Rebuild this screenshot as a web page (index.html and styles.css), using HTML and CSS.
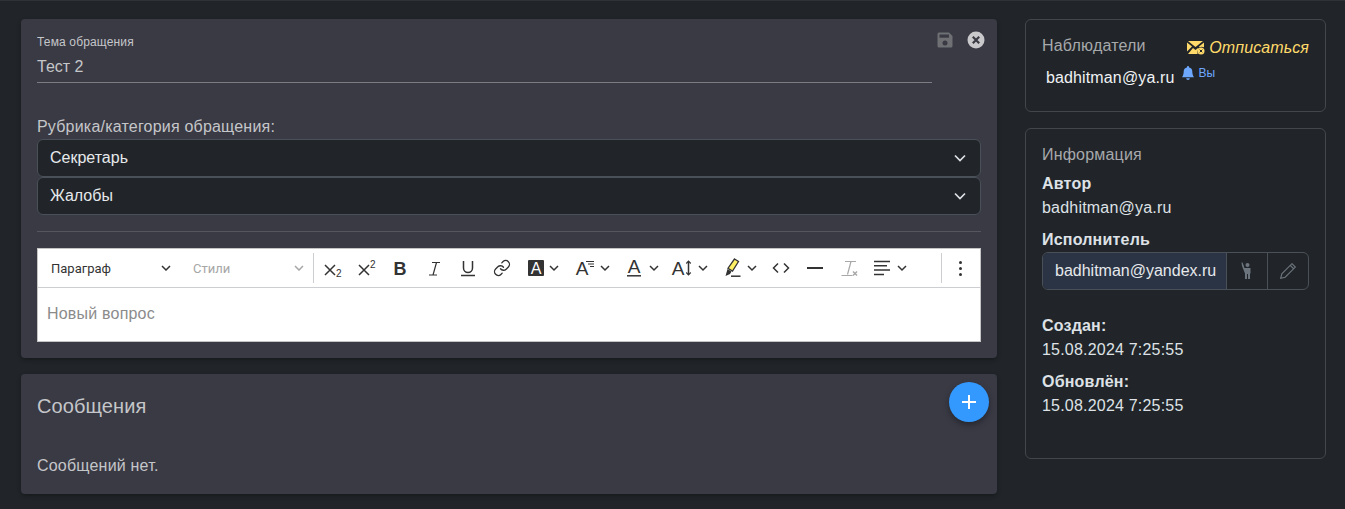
FILE: index.html
```html
<!DOCTYPE html>
<html lang="ru">
<head>
    <meta charset="UTF-8">
    <title>Обращение</title>
    <link rel="stylesheet" href="styles.css">
</head>
<body>
    <div class="page">
        <div class="main-col">
            <div class="card ticket-card">
                <div class="ticket-actions">
                    <svg class="act-save" width="18" height="18" viewBox="0 0 18 18"><path fill="#6f7074" d="M3 1.500h10l3.500 3.500v10a1.500 1.500 0 0 1-1.500 1.500H3a1.500 1.500 0 0 1-1.500-1.500V3A1.500 1.500 0 0 1 3 1.500z"/><rect x="3.500" y="3.500" width="9.500" height="3.200" fill="#393a44"/><circle cx="9" cy="12" r="2.500" fill="#393a44"/></svg>
                    <svg class="act-close" width="18" height="18" viewBox="0 0 18 18"><circle cx="9" cy="9" r="8.500" fill="#c9c9cb"/><path d="M5.800 5.800l6.400 6.400M12.200 5.800l-6.400 6.400" stroke="#393a44" stroke-width="2.200"/></svg>
                </div>
                <div class="subject">
                    <div class="subject-label">Тема обращения</div>
                    <div class="subject-value">Тест 2</div>
                </div>
                <div class="cat-label">Рубрика/категория обращения:</div>
                <div class="select">Секретарь<svg width="12" height="8" viewBox="0 0 12 8"><path d="M1 1.500l5 5 5-5" fill="none" stroke="#dee2e6" stroke-width="1.700"/></svg></div>
                <div class="select">Жалобы<svg width="12" height="8" viewBox="0 0 12 8"><path d="M1 1.500l5 5 5-5" fill="none" stroke="#dee2e6" stroke-width="1.700"/></svg></div>
                <hr class="divider">
                <div class="editor">
                    <div class="toolbar">
                        <div class="tb-drop tb-para">Параграф<svg class="caret" width="10" height="6" viewBox="0 0 10 6"><path d="M1 1l4 4 4-4"/></svg></div>
                        <div class="tb-drop tb-styles">Стили<svg class="caret caret-off" width="10" height="6" viewBox="0 0 10 6"><path d="M1 1l4 4 4-4"/></svg></div>
                        <div class="tb-sep"></div>

                        <div class="tb-btn"><svg width="20" height="20" viewBox="0 0 20 20"><path class="ln" d="M2 7l10 10M12 7L2 17"/><text x="13" y="19" class="sm">2</text></svg></div>
                        <div class="tb-btn tb-narrow"><svg width="20" height="20" viewBox="0 0 20 20"><path class="ln" d="M2 7l10 10M12 7L2 17"/><text x="13" y="10" class="sm">2</text></svg></div>
                        <div class="tb-btn"><svg width="20" height="20" viewBox="0 0 20 20"><text x="10" y="17" class="bold">B</text></svg></div>
                        <div class="tb-btn"><svg width="20" height="20" viewBox="0 0 20 20"><path class="ln-thin" d="M8 4.500h8M5 17h8M12.500 4.500L9 17"/></svg></div>
                        <div class="tb-btn"><svg width="20" height="20" viewBox="0 0 20 20"><path class="ln" d="M5.500 3v7a4.500 4.500 0 0 0 9 0V3"/><path class="ln" d="M3 17.500h14"/></svg></div>
                        <div class="tb-btn"><svg class="ic-link" width="18" height="18" viewBox="0 0 24 24"><path d="M10 13a5 5 0 0 0 7.540.540l3-3a5 5 0 0 0-7.070-7.070l-1.720 1.710"/><path d="M14 11a5 5 0 0 0-7.540-.540l-3 3a5 5 0 0 0 7.070 7.070l1.710-1.710"/></svg></div>

                        <div class="tb-btn tb-wide"><svg width="16" height="16" viewBox="0 0 16 16"><rect width="16" height="16" rx="1" fill="#333"/><text x="8" y="14" class="on-dark">A</text></svg><svg class="caret" width="10" height="6" viewBox="0 0 10 6"><path d="M1 1l4 4 4-4"/></svg></div>
                        <div class="tb-btn tb-wide"><svg width="20" height="20" viewBox="0 0 20 20"><text x="7" y="17" class="big">A</text><path class="ln-thin" d="M11 3.500h8M13 6h6M15 8.500h4"/></svg><svg class="caret" width="10" height="6" viewBox="0 0 10 6"><path d="M1 1l4 4 4-4"/></svg></div>
                        <div class="tb-btn tb-wide"><svg width="20" height="20" viewBox="0 0 20 20"><text x="10" y="15" class="big">A</text><path class="ln" d="M3 17.800h14"/></svg><svg class="caret" width="10" height="6" viewBox="0 0 10 6"><path d="M1 1l4 4 4-4"/></svg></div>
                        <div class="tb-btn tb-wide tb-size"><svg width="22" height="20" viewBox="0 0 22 20"><text x="7" y="16.500" class="big">A</text><path class="ln" d="M17.500 3.500v13"/><path class="ln-thin" d="M15.300 5.500l2.200-2.300 2.200 2.300M15.300 14.500l2.200 2.300 2.200-2.300"/></svg><svg class="caret" width="10" height="6" viewBox="0 0 10 6"><path d="M1 1l4 4 4-4"/></svg></div>
                        <div class="tb-btn tb-wide"><svg width="20" height="20" viewBox="0 0 20 20"><path d="M12.500 1l4 2.500-6 9.500-4.500-2.800z" fill="#fff064" stroke="#333" stroke-width="1.300"/><path d="M5.500 11l4 2.500-1.500 2.500-4.500 2z" fill="#333"/><path class="ln" d="M9 18.200h9.500"/></svg><svg class="caret" width="10" height="6" viewBox="0 0 10 6"><path d="M1 1l4 4 4-4"/></svg></div>

                        <div class="tb-btn"><svg width="20" height="20" viewBox="0 0 20 20"><path class="ln" d="M7 5.500L2.500 10 7 14.500M13 5.500l4.500 4.500-4.500 4.500"/></svg></div>
                        <div class="tb-btn"><svg width="20" height="20" viewBox="0 0 20 20"><path d="M2 10h16" stroke="#333" stroke-width="2"/></svg></div>
                        <div class="tb-btn"><svg width="20" height="20" viewBox="0 0 20 20"><path d="M6 3.500h11M12 3.500L8.500 16.500M2.500 17.500h11" fill="none" stroke="#a8a8a8" stroke-width="1.200"/><path d="M14 13.500l4 4M18 13.500l-4 4" stroke="#a8a8a8" stroke-width="1.500"/></svg></div>
                        <div class="tb-btn tb-wide tb-align"><svg width="20" height="20" viewBox="0 0 20 20"><path class="ln" d="M2 3.500h16M2 7.800h13M2 12.100h16M2 16.400h10"/></svg><svg class="caret" width="10" height="6" viewBox="0 0 10 6"><path d="M1 1l4 4 4-4"/></svg></div>

                        <div class="tb-sep tb-sep-end"></div>
                        <div class="tb-more"><i></i><i></i><i></i></div>
                    </div>
                    <div class="editor-body">Новый вопрос</div>
                </div>
            </div>
            <div class="card messages-card">
                <div class="fab"><svg width="16" height="16" viewBox="0 0 16 16"><path d="M8 1v14M1 8h14" stroke="#fff" stroke-width="2"/></svg></div>
                <h2 class="messages-title">Сообщения</h2>
                <p class="messages-empty">Сообщений нет.</p>
            </div>
        </div>
        <div class="side-col">
            <div class="side-card watchers">
                <div class="watchers-head">
                    <span class="side-title">Наблюдатели</span>
                    <span class="unsub"><svg width="18" height="14" viewBox="0 0 18 14"><path fill="#ffda6a" d="M1 0h15l-7.500 6zM0 1.500l5 4-5 5zM17 1.500v4.800a5 5 0 0 0-4.500 0L12 5.500zM1 13l5-6 2.500 2 2.500-2 .8.800A5 5 0 0 0 10.500 13z"/><circle cx="14" cy="10" r="3.500" fill="#ffda6a"/><path d="M12.700 8.700l2.600 2.600M15.300 8.700l-2.600 2.600" stroke="#212529" stroke-width="1"/></svg><em>Отписаться</em></span>
                </div>
                <div class="watcher-row">
                    <span class="watcher-mail">badhitman@ya.ru</span>
                    <span class="watcher-you"><svg width="12" height="14" viewBox="0 0 11 13"><path fill="#6ea8fe" d="M5.500 0a1 1 0 0 1 1 1v.400A3.800 3.800 0 0 1 9.500 5c0 1.500.300 3.500 1.500 5.500H0C1.200 8.500 1.500 6.500 1.500 5a3.800 3.800 0 0 1 3-3.600V1a1 1 0 0 1 1-1zM3.800 11.300h3.400a1.700 1.700 0 0 1-3.400 0z"/></svg>Вы</span>
                </div>
            </div>
            <div class="side-card info">
                <div class="side-title">Информация</div>
                <div class="info-label info-first">Автор</div>
                <div class="info-value">badhitman@ya.ru</div>
                <div class="info-label">Исполнитель</div>
                <div class="assignee">
                    <span class="assignee-mail">badhitman@yandex.ru</span>
                    <span class="assignee-btn"><svg width="14" height="18" viewBox="0 0 14 18"><circle cx="7.500" cy="3" r="2" fill="#6c757d"/><path fill="#6c757d" d="M4.500 6h6v5.500H10V17H8V12H7v5H5v-5.500L2 4l-.5-3.500h1L3.500 3z"/></svg></span>
                    <span class="assignee-btn"><svg width="18" height="18" viewBox="0 0 16 16"><path fill="none" stroke="#6c757d" stroke-width="1" d="M11.500 1.500l3 3L5.500 13.500l-4 1 1-4zM10 3l3 3"/></svg></span>
                </div>
                <div class="info-label info-gap">Создан:</div>
                <div class="info-value">15.08.2024 7:25:55</div>
                <div class="info-label">Обновлён:</div>
                <div class="info-value">15.08.2024 7:25:55</div>
            </div>
        </div>
    </div>
</body>
</html>
```

FILE: styles.css
```css
* {
    box-sizing: border-box;
}
html, body {
    height: 100%;
}
body {
    margin: 0;
    background-color: #212529;
    border-top: 1px solid #2f3236;
    color: #dee2e6;
    font-family: "Liberation Sans", Arial, sans-serif;
    font-size: 16px;
    letter-spacing: 0.2px;
    overflow: hidden;
}
.page {
    display: flex;
    align-items: flex-start;
    gap: 28px;
    padding: 18px 19px 0 21px;
}
.main-col {
    width: 976px;
    display: flex;
    flex-direction: column;
    gap: 16px;
}
.side-col {
    width: 301px;
    display: flex;
    flex-direction: column;
    gap: 16px;
}

/* left cards */
.card {
    position: relative;
    background-color: #393a44;
    border-radius: 4px;
    box-shadow: 0 2px 4px rgba(0, 0, 0, 0.3);
}
.ticket-card {
    height: 339px;
    padding: 16px 16px 0;
}
.ticket-actions {
    position: absolute;
    top: 12px;
    right: 12px;
    display: flex;
    gap: 13px;
}
.subject {
    width: 895px;
    height: 48px;
    border-bottom: 1px solid #7c7d83;
}
.subject-label {
    font-size: 12px;
    line-height: 14px;
    letter-spacing: 0.15px;
    color: #c5c6c9;
}
.subject-value {
    margin-top: 7px;
    font-size: 16px;
    line-height: 22px;
    letter-spacing: 0;
    color: #c5c6c9;
}
.cat-label {
    margin-top: 33px;
    padding-bottom: 1px;
    font-size: 16px;
    line-height: 22px;
    color: #c5c6c9;
}
.select {
    height: 38px;
    padding: 0 14px 0 12px;
    display: flex;
    align-items: center;
    justify-content: space-between;
    background-color: #212529;
    border: 1px solid #495057;
    border-radius: 6px;
    color: #e6e9ec;
    letter-spacing: 0;
}
.divider {
    margin: 16px 0;
    border: 0;
    border-top: 1px solid #55565e;
}

/* editor */
.editor {
    background-color: #fff;
    border: 1px solid #c4c4c4;
    color: #333;
}
.toolbar {
    height: 39px;
    display: flex;
    align-items: center;
    border-bottom: 1px solid #ccced1;
    letter-spacing: 0;
}
.tb-drop {
    display: flex;
    align-items: center;
    justify-content: space-between;
    height: 100%;
    font-family: Roboto, "Liberation Sans", sans-serif;
    font-size: 13px;
}
.tb-para {
    width: 135px;
    padding: 0 2px 0 13px;
}
.tb-styles {
    width: 140px;
    padding: 0 9px 0 20px;
    color: #a6a6a6;
}
.tb-sep {
    width: 1px;
    height: 30px;
    margin-right: 2px;
    background-color: #ccced1;
}
.tb-sep-end {
    margin-left: auto;
    margin-right: 0;
}
.tb-btn {
    width: 34px;
    height: 100%;
    flex-shrink: 0;
    display: flex;
    align-items: center;
    justify-content: center;
}
.tb-btn svg {
    overflow: visible;
}
.tb-narrow {
    width: 33px;
}
.tb-wide {
    width: 49px;
    gap: 5px;
}
.tb-size,
.tb-align {
    padding-right: 3px;
}
.tb-more {
    width: 38px;
    padding-right: 1px;
    display: flex;
    flex-direction: column;
    align-items: center;
    gap: 3px;
}
.tb-more i {
    width: 3px;
    height: 3px;
    border-radius: 50%;
    background-color: #333;
}
.caret {
    flex-shrink: 0;
}
.caret path {
    fill: none;
    stroke: #333;
    stroke-width: 1.500;
}
.caret-off path {
    stroke: #a6a6a6;
}
.ln {
    fill: none;
    stroke: #333;
    stroke-width: 1.500;
}
.ln-thin {
    fill: none;
    stroke: #333;
    stroke-width: 1.200;
}
.ic-link path {
    fill: none;
    stroke: #333;
    stroke-width: 1.800;
    stroke-linecap: round;
}
.sm {
    font-size: 10px;
    fill: #333;
}
.bold {
    font-size: 18px;
    font-weight: bold;
    text-anchor: middle;
    fill: #333;
}
.big {
    font-size: 19px;
    text-anchor: middle;
    fill: #333;
}
.on-dark {
    font-size: 16px;
    text-anchor: middle;
    fill: #fff;
}
.editor-body {
    height: 53px;
    padding: 0 9px 1px;
    display: flex;
    align-items: center;
    color: #8b8b8b;
    font-size: 16px;
    letter-spacing: 0.2px;
}

/* messages */
.messages-card {
    height: 120px;
    padding: 0 16px;
}
.fab {
    position: absolute;
    top: 8px;
    right: 8px;
    width: 40px;
    height: 40px;
    display: flex;
    align-items: center;
    justify-content: center;
    border-radius: 50%;
    background-color: #3399ff;
    box-shadow: 0 3px 6px rgba(0, 0, 0, 0.35);
}
.messages-title {
    margin: 0;
    padding-top: 20px;
    font-size: 20px;
    line-height: 24px;
    font-weight: normal;
    letter-spacing: 0.1px;
    color: #c5c6c9;
}
.messages-empty {
    margin: 37px 0 0;
    font-size: 16px;
    line-height: 22px;
    color: #c5c6c9;
}

/* right column */
.side-card {
    border: 1px solid #43474c;
    border-radius: 6px;
    padding: 16px;
}
.watchers {
    height: 93px;
}
.info {
    height: 331px;
}
.side-title {
    font-size: 16px;
    line-height: 20px;
    color: #a7a9ac;
}
.watchers-head {
    display: flex;
    justify-content: space-between;
}
.unsub {
    margin-top: 3px;
    display: flex;
    align-items: center;
    gap: 4px;
    letter-spacing: 0.1px;
    color: #ffda6a;
}
.unsub em {
    font-style: italic;
}
.watcher-row {
    margin-top: 9px;
    padding-left: 4px;
    display: flex;
    align-items: flex-start;
    gap: 8px;
}
.watcher-mail {
    line-height: 24px;
    letter-spacing: 0.13px;
    color: #f0f2f4;
}
.watcher-you {
    display: flex;
    align-items: center;
    gap: 4px;
    font-size: 12px;
    line-height: 16px;
    margin-top: -1px;
    letter-spacing: 0;
    color: #6ea8fe;
}
.info-label {
    margin-top: 8px;
    font-weight: bold;
    line-height: 24px;
}
.info-first {
    margin-top: 7px;
}
.info-value {
    line-height: 24px;
}
.info-gap {
    margin-top: 24px;
}
.assignee {
    width: 267px;
    height: 38px;
    display: flex;
    border: 1px solid #495057;
    border-radius: 6px;
    overflow: hidden;
}
.assignee-mail {
    width: 183px;
    flex-shrink: 0;
    padding-left: 12px;
    display: flex;
    align-items: center;
    white-space: nowrap;
    background-color: #2b3445;
    color: #e6e9ec;
    letter-spacing: 0;
}
.assignee-btn {
    flex: 1;
    display: flex;
    align-items: center;
    justify-content: center;
    border-left: 1px solid #495057;
}
```
